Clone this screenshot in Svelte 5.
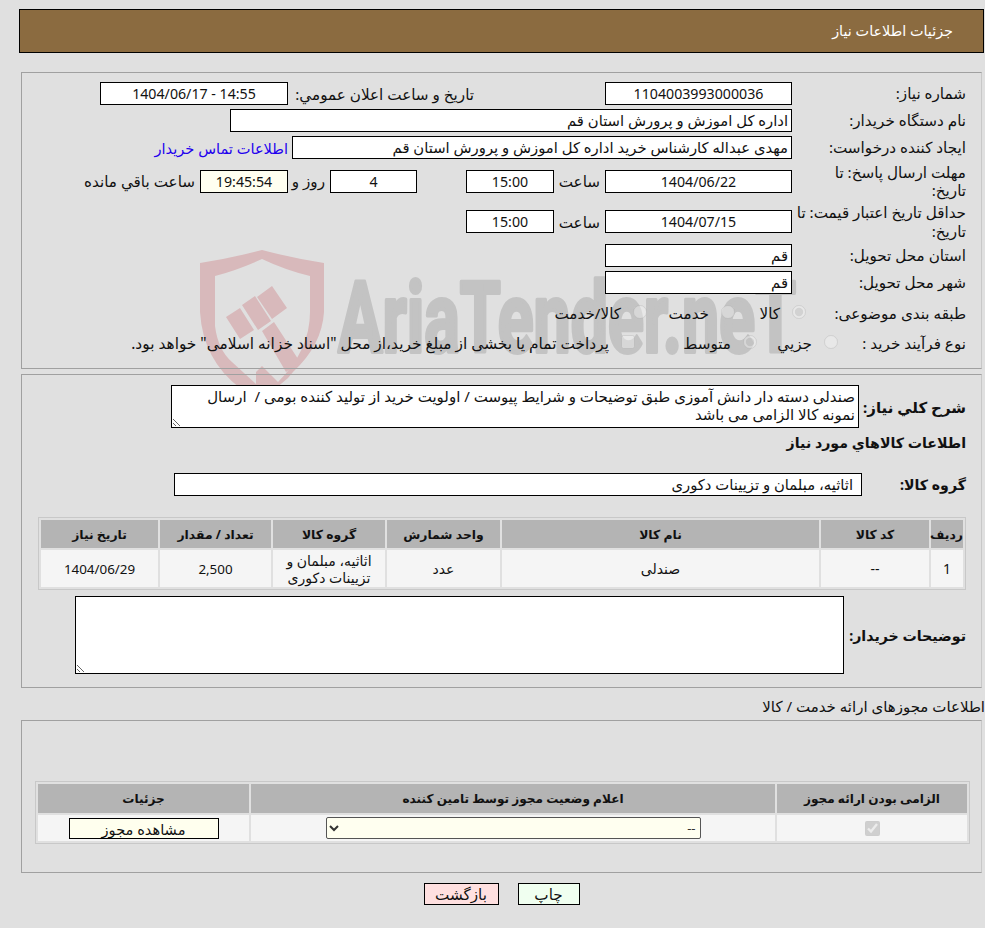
<script>
  const goods = [
    { row: '1', code: '--', name: 'صندلی', unit: 'عدد', group: 'اثاثیه، مبلمان و تزیینات دکوری', qty: '2,500', date: '1404/06/29' }
  ];
</script>

<div class="page">
  <svg class="watermark" width="620" height="160" viewBox="190 240 620 160" aria-hidden="true">
    <path class="shield" fill-rule="evenodd" d="M200 263 Q232 258 262 250 Q292 258 324 263 L324 312 Q322 345 293 372 L288 378 L262 400 L240 388 Q203 360 200 312 Z M215 276 L215 326 Q218 350 232 362 L256 384 L256 372 L262 366 L278 382 Q310 350 310 312 L310 276 Q285 270 262 259 Q238 270 215 276 Z" />
    <path class="shield" d="M257 297 L272 286 L287 308 L272 319 Z M242 305 L255 296 L271 321 L258 330 Z M226 317 L240 308 L254 330 L240 339 Z M262 331 L274 322 L300 362 L286 372 Z" />
    <text class="wm-text" x="338" y="352" textLength="458" lengthAdjust="spacingAndGlyphs">AriaTender.neT</text>
  </svg>

  <header class="title-bar">جزئیات اطلاعات نیاز</header>

  <section class="panel panel-main">
    <div class="row">
      <div class="label">شماره نیاز:</div>
      <div class="box box-date num">1104003993000036</div>
      <div class="announce">تاریخ و ساعت اعلان عمومي:</div>
      <div class="box box-announce num">14:55 - 1404/06/17</div>
    </div>
    <div class="row">
      <div class="label">نام دستگاه خریدار:</div>
      <div class="box box-buyer start">اداره کل اموزش و پرورش استان قم</div>
    </div>
    <div class="row">
      <div class="label">ایجاد کننده درخواست:</div>
      <div class="box box-creator start">مهدی عبداله کارشناس خرید اداره کل اموزش و پرورش استان قم</div>
      <a class="contact" href="#top">اطلاعات تماس خریدار</a>
    </div>
    <div class="row row-deadline">
      <div class="label">مهلت ارسال پاسخ: تا<br />تاریخ:</div>
      <div class="box box-date num">1404/06/22</div>
      <div class="hour">ساعت</div>
      <div class="box box-time num">15:00</div>
      <div class="box box-days num">4</div>
      <div class="days-text">روز و</div>
      <div class="box box-count num">19:45:54</div>
      <div class="left-text">ساعت باقي مانده</div>
    </div>
    <div class="row row-valid">
      <div class="label">حداقل تاریخ اعتبار قیمت: تا<br />تاریخ:</div>
      <div class="box box-date num">1404/07/15</div>
      <div class="hour">ساعت</div>
      <div class="box box-time num">15:00</div>
    </div>
    <div class="row">
      <div class="label">استان محل تحویل:</div>
      <div class="box box-date start">قم</div>
    </div>
    <div class="row">
      <div class="label">شهر محل تحویل:</div>
      <div class="box box-date start">قم</div>
    </div>
    <div class="row row-subject">
      <div class="label">طبقه بندی موضوعی:</div>
      <label class="opt opt-goods"><input type="radio" name="subject" checked disabled />کالا</label>
      <label class="opt opt-service"><input type="radio" name="subject" disabled />خدمت</label>
      <label class="opt opt-both"><input type="radio" name="subject" disabled />کالا/خدمت</label>
    </div>
    <div class="row row-process">
      <div class="label">نوع فرآیند خرید :</div>
      <label class="opt opt-small"><input type="radio" name="process" disabled />جزيي</label>
      <label class="opt opt-medium"><input type="radio" name="process" checked disabled />متوسط</label>
      <label class="opt opt-pay"><input type="checkbox" disabled />پرداخت تمام یا بخشی از مبلغ خرید،از محل "اسناد خزانه اسلامی" خواهد بود.</label>
    </div>
  </section>

  <section class="panel panel-goods">
    <div class="row row-desc">
      <div class="label-bold desc-label">شرح كلي نياز:</div>
      <textarea class="desc" readonly>صندلی دسته دار دانش آموزی طبق توضیحات و شرایط پیوست / اولویت خرید از تولید کننده بومی /  ارسال نمونه کالا الزامی می باشد</textarea>
    </div>
    <div class="subhead">اطلاعات كالاهاي مورد نياز</div>
    <div class="row row-group">
      <div class="label-bold group-label">گروه كالا:</div>
      <div class="box box-group">اثاثیه، مبلمان و تزیینات دکوری</div>
    </div>
    <table class="grid goods">
      <thead>
        <tr>
          <th class="c-row">ردیف</th>
          <th class="c-code">کد کالا</th>
          <th>نام کالا</th>
          <th class="c-unit">واحد شمارش</th>
          <th class="c-group">گروه کالا</th>
          <th class="c-qty">تعداد / مقدار</th>
          <th class="c-date">تاریخ نیاز</th>
        </tr>
      </thead>
      <tbody>
        {#each goods as item}
          <tr>
            <td>{item.row}</td>
            <td>{item.code}</td>
            <td>{item.name}</td>
            <td>{item.unit}</td>
            <td class="wrap">{item.group}</td>
            <td class="cell-num">{item.qty}</td>
            <td class="cell-num">{item.date}</td>
          </tr>
        {/each}
      </tbody>
    </table>
    <div class="row row-notes">
      <div class="label-bold notes-label">توضیحات خریدار:</div>
      <textarea class="notes" readonly></textarea>
    </div>
  </section>

  <div class="licence-title">اطلاعات مجوزهای ارائه خدمت / کالا</div>

  <section class="panel panel-licence">
    <table class="grid licence">
      <thead>
        <tr>
          <th class="l-required">الزامی بودن ارائه مجوز</th>
          <th>اعلام وضعیت مجوز توسط تامین کننده</th>
          <th class="l-details">جزئیات</th>
        </tr>
      </thead>
      <tbody>
        <tr>
          <td><input class="required-check" type="checkbox" checked disabled /></td>
          <td>
            <select class="status">
              <option>--</option>
            </select>
          </td>
          <td><button class="view">مشاهده مجوز</button></td>
        </tr>
      </tbody>
    </table>
  </section>

  <div class="actions">
    <button class="action print">چاپ</button>
    <button class="action back">بازگشت</button>
  </div>
</div>

<style>
  :global(body) {
    margin: 0;
    background: #e0e0e0;
  }

  .page {
    position: relative;
    width: 985px;
    height: 928px;
    overflow: hidden;
    box-sizing: border-box;
    padding: 9px 1px 0 19px;
    direction: rtl;
    color: #111;
    font-family: 'Noto Sans', 'DejaVu Sans', sans-serif;
    font-size: 15.2px;
  }

  .watermark {
    position: absolute;
    left: 190px;
    top: 240px;
  }

  .shield {
    fill: #d8b9bb;
  }

  .wm-text {
    fill: #c3c3c3;
    stroke: #c3c3c3;
    stroke-width: 4px;
    stroke-linejoin: round;
    font-family: Roboto, sans-serif;
    font-weight: 700;
    font-size: 98px;
    direction: ltr;
  }

  .title-bar {
    position: relative;
    box-sizing: border-box;
    width: 965px;
    height: 44px;
    line-height: 42px;
    padding-right: 30px;
    background: #8b6b40;
    border: 1px solid #000;
    color: #fff;
    font-size: 14.4px;
  }

  .panel {
    position: relative;
    box-sizing: border-box;
    width: 961px;
    margin-right: 2px;
    border: 1px solid #a0a0a0;
    border-right-color: #c8c8c8;
  }

  .panel-main {
    margin-top: 19px;
    height: 297px;
    padding: 7px 15px 0 0;
  }

  .panel-goods {
    margin-top: 5px;
    height: 314px;
    padding: 10px 15px 0 0;
  }

  .panel-licence {
    height: 153px;
    padding-top: 60px;
  }

  .row {
    display: flex;
    align-items: center;
    height: 27px;
  }

  .row-deadline {
    height: 40px;
  }

  .row-valid {
    height: 41px;
  }

  .row-subject {
    height: 34px;
  }

  .row-process {
    height: 26px;
  }

  .label {
    flex: none;
    width: 174px;
    line-height: 18.5px;
    white-space: nowrap;
  }

  .box {
    box-sizing: border-box;
    flex: none;
    height: 23px;
    line-height: 21px;
    background: #fff;
    border: 1px solid #000;
    font-size: 14.8px;
    text-align: center;
    white-space: nowrap;
    overflow: hidden;
  }

  .num {
    font-size: 14.2px;
  }

  .start {
    text-align: right;
    padding-right: 3px;
  }

  .box-date {
    width: 187px;
  }

  .box-announce {
    width: 188px;
    margin-right: 5px;
  }

  .announce {
    flex: none;
    width: 181px;
    margin-right: 131px;
    white-space: nowrap;
  }

  .box-buyer {
    width: 562px;
  }

  .box-creator {
    width: 500px;
  }

  .contact {
    margin-right: 4px;
    color: #2200ee;
    text-decoration: none;
    font-size: 14.6px;
    white-space: nowrap;
  }

  .hour {
    width: 46px;
    margin-right: 5px;
    text-align: right;
  }

  .box-time {
    width: 88px;
  }

  .box-days {
    width: 87px;
    margin-right: 49px;
  }

  .days-text {
    flex: none;
    margin-right: 5px;
    width: 33px;
    white-space: nowrap;
  }

  .box-count {
    width: 88px;
    margin-right: 4px;
    background: #fffff0;
  }

  .left-text {
    margin-right: 5px;
    white-space: nowrap;
  }

  .opt {
    display: flex;
    flex: none;
    align-items: center;
    white-space: nowrap;
  }

  .opt input {
    flex: none;
    width: 14px;
    height: 14px;
    margin: 0 0 2px 12px;
    opacity: 0.6;
  }

  .opt-goods {
    margin-right: -14px;
    width: 71px;
  }

  .opt-service {
    width: 88px;
  }

  .opt-both {
    width: 100px;
  }

  .opt-small {
    margin-right: -46px;
    width: 81px;
  }

  .opt-medium {
    width: 122px;
  }

  .opt-pay {
    font-size: 15.4px;
  }

  .label-bold,
  .subhead {
    font-weight: 700;
    font-size: 14.2px;
  }

  .row-desc {
    height: 43px;
  }

  .desc-label {
    width: 107px;
    flex: none;
    font-size: 15px;
  }

  .desc,
  .notes {
    box-sizing: border-box;
    flex: none;
    display: block;
    margin: 0;
    background: #fff;
    border: 1px solid #000;
    border-radius: 0;
    color: #111;
    font: inherit;
    line-height: 17.5px;
    padding: 2px 3px;
    outline: none;
  }

  .desc {
    width: 688px;
    height: 43px;
    font-size: 15px;
  }

  .subhead {
    height: 30px;
    line-height: 30px;
  }

  .row-group {
    margin-top: 15px;
    height: 23px;
  }

  .group-label {
    width: 104px;
    flex: none;
  }

  .box-group {
    width: 688px;
    text-align: right;
    padding-right: 8px;
  }

  .grid {
    border-collapse: separate;
    border-spacing: 2px;
    border: 1px solid #c8c8c8;
    table-layout: fixed;
    text-align: center;
    font-size: 14px;
  }

  .grid th {
    padding: 0;
    height: 28px;
    background: #b4b4b4;
    font-size: 12.4px;
  }

  .grid td {
    padding: 0;
    background: #f5f5f5;
  }

  .goods {
    margin-top: 21px;
    width: 928px;
  }

  .goods td {
    height: 37px;
  }

  .wrap {
    line-height: 17px;
  }

  .grid .cell-num {
    font-size: 13.4px;
  }

  .c-row { width: 32px; }
  .c-code { width: 108px; }
  .c-unit { width: 113px; }
  .c-group { width: 112px; }
  .c-qty { width: 111px; }
  .c-date { width: 117px; }

  .row-notes {
    margin-top: 6px;
    height: 78px;
  }

  .notes-label {
    width: 122px;
    flex: none;
    white-space: nowrap;
  }

  .notes {
    width: 769px;
    height: 78px;
  }

  .licence-title {
    position: relative;
    height: 32px;
    line-height: 36px;
    margin-left: -19px;
    margin-right: -1px;
    white-space: nowrap;
    font-size: 15px;
  }

  .licence {
    width: 935px;
    margin: 0 11px 0 0;
  }

  .licence th {
    height: 29px;
    font-size: 12.1px;
  }

  .licence td {
    height: 26px;
  }

  .l-required { width: 190px; }
  .l-details { width: 211px; }

  .required-check {
    display: block;
    width: 15px;
    height: 15px;
    margin: 0 auto;
  }

  .status {
    display: block;
    box-sizing: border-box;
    width: 375px;
    height: 22px;
    margin: 0 auto;
    background: #fffff0;
    border: 1px solid #555;
    border-radius: 2px;
    font: inherit;
    font-size: 13px;
    color: #333;
  }

  .view {
    display: block;
    box-sizing: border-box;
    width: 150px;
    height: 21px;
    margin: 0 auto;
    padding: 0;
    background: #ffffee;
    border: 1px solid #000;
    font: inherit;
    font-size: 14.6px;
    color: #111;
  }

  .actions {
    position: relative;
    display: flex;
    justify-content: center;
    gap: 19px;
    margin-top: 10px;
  }

  .action {
    box-sizing: border-box;
    height: 22px;
    padding: 0;
    border: 1px solid #000;
    font: inherit;
    color: #111;
  }

  .print {
    width: 62px;
    background: #f0fff0;
  }

  .back {
    width: 75px;
    background: #ffe0e0;
  }
</style>
